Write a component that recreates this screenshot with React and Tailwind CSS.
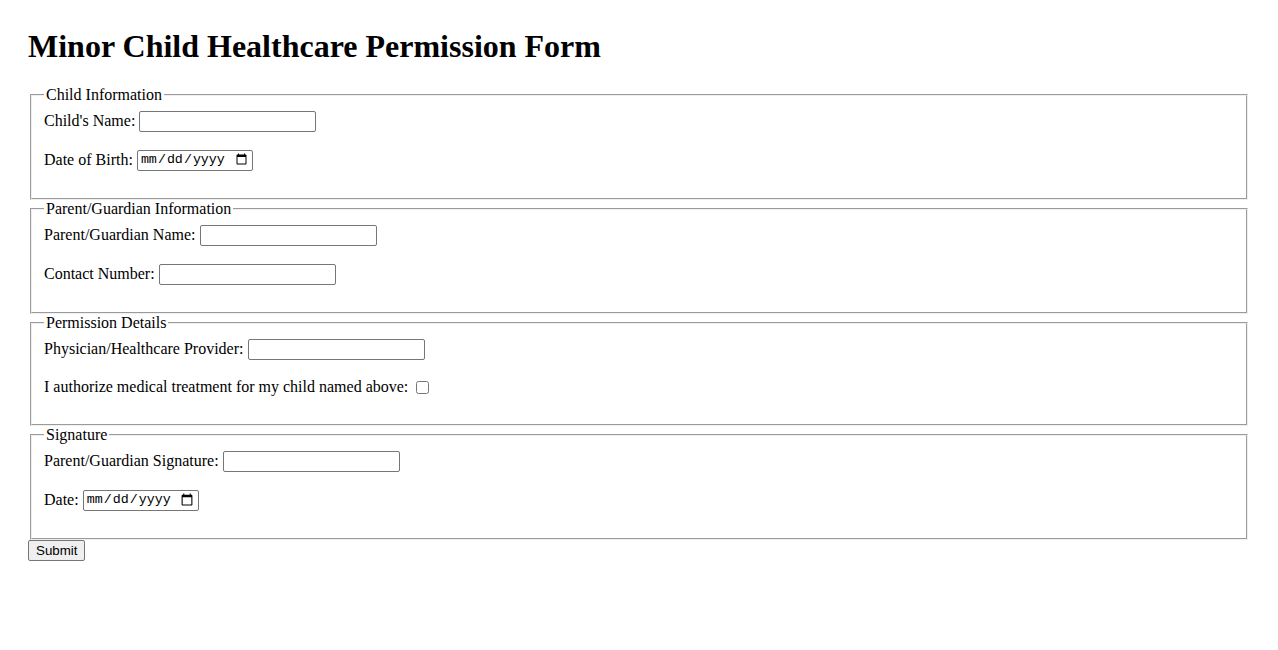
import React from "react";

function Row({ label, children, short }) {
  return (
    <div className={short ? "flex items-center gap-[4px] h-[20px] mb-[17px]" : "flex items-center gap-[4px] h-[22px] mb-[17px]"}>
      <label>{label}</label>
      {children}
    </div>
  );
}

function TextInput() {
  return (
    <input
      type="text"
      className="w-[177px] h-[21px] px-[2px] py-[1px] border border-[#767676] rounded-[2px] bg-white text-[13.33px] font-['Liberation_Sans',sans-serif]"
    />
  );
}

function DateInput() {
  return (
    <input
      type="date"
      className="w-[116px] h-[21px] px-[2px] py-[1px] border border-[#767676] rounded-[2px] bg-white text-[13.33px] font-['Liberation_Mono',monospace]"
    />
  );
}

function Section({ title, children }) {
  return (
    <fieldset className="mx-[2px] px-[12px] pt-[5.6px] pb-[10px] border-2 [border-style:groove] [border-color:ThreeDFace]">
      <legend className="px-[2px]">{title}</legend>
      {children}
    </fieldset>
  );
}

export default function App() {
  return (
    <div className="min-h-screen bg-white text-black text-[16px] leading-[18.4px] p-[28px] font-['Liberation_Serif',serif]">
      <h1 className="text-[32px] leading-[37px] font-bold mb-[21px]">
        Minor Child Healthcare Permission Form
      </h1>
      <form onSubmit={(e) => e.preventDefault()}>
        <Section title="Child Information">
          <Row label="Child's Name:">
            <TextInput />
          </Row>
          <Row label="Date of Birth:">
            <DateInput />
          </Row>
        </Section>

        <Section title="Parent/Guardian Information">
          <Row label="Parent/Guardian Name:">
            <TextInput />
          </Row>
          <Row label="Contact Number:">
            <TextInput />
          </Row>
        </Section>

        <Section title="Permission Details">
          <Row label="Physician/Healthcare Provider:">
            <TextInput />
          </Row>
          <Row short label="I authorize medical treatment for my child named above:">
            <input type="checkbox" className="ml-[4px] w-[13px] h-[13px]" />
          </Row>
        </Section>

        <Section title="Signature">
          <Row label="Parent/Guardian Signature:">
            <TextInput />
          </Row>
          <Row label="Date:">
            <DateInput />
          </Row>
        </Section>

        <button
          type="submit"
          className="px-[7px] py-[1px] h-[21px] border border-[#767676] rounded-[2px] bg-[#efefef] text-[13.33px] leading-[15px] font-['Liberation_Sans',sans-serif]"
        >
          Submit
        </button>
      </form>
    </div>
  );
}
